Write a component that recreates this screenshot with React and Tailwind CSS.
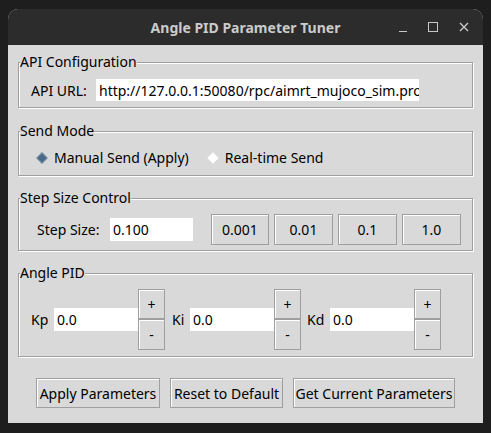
import React from "react";

const Frame = ({ title, className, children }) => (
  <div
    className={`relative border border-[#9f9f9f] shadow-[inset_1px_1px_0_#ffffff,1px_1px_0_#ffffff] ${className}`}
  >
    <span className="absolute left-[1px] top-[-11px] bg-[#d9d9d9] text-[14px] leading-[20px] text-black">
      {title}
    </span>
    {children}
  </div>
);

const TkButton = ({ children, className }) => (
  <button
    className={`flex items-center justify-center border border-[#9f9f9f] bg-[#d9d9d9] shadow-[inset_1px_1px_0_#ffffff] text-[14px] text-black ${className}`}
  >
    {children}
  </button>
);

const Entry = ({ value, className }) => (
  <div
    className={`flex items-center bg-white pl-[3px] text-[14px] text-black ${className}`}
  >
    <span className="whitespace-nowrap overflow-hidden">{value}</span>
  </div>
);

const Radio = ({ checked, label }) => (
  <div className="flex items-center">
    <span className="flex h-[12px] w-[12px] items-center justify-center">
      <span
        className={`block h-[8px] w-[8px] rotate-45 ${
          checked ? "bg-[#4a6984] border border-[#6d8aa3]" : "bg-white"
        }`}
      />
    </span>
    <span className="ml-[6px] text-[14px] text-black">{label}</span>
  </div>
);

const PidField = ({ label, labelW }) => (
  <div className="flex items-center">
    <span className={`text-[14px] text-black ${labelW}`}>{label}</span>
    <Entry value="0.0" className="h-[23px] w-[84px]" />
    <div className="flex flex-col">
      <TkButton className="h-[30px] w-[27px]">+</TkButton>
      <TkButton className="h-[31px] w-[27px]">-</TkButton>
    </div>
  </div>
);

export default function App() {
  return (
    <div className="h-[433px] w-[491px] bg-[#1e1e1e] pl-[8px] pt-[9px] font-['Noto_Sans',sans-serif]">
      <div className="flex h-[414px] w-[475px] flex-col overflow-hidden rounded-t-[10px] bg-[#d9d9d9]">
        {/* title bar */}
        <div className="relative flex h-[36px] shrink-0 items-center justify-center bg-[#2c2c2c]">
          <span className="text-[14px] font-bold text-[#cbcbcb]">
            Angle PID Parameter Tuner
          </span>
          <div className="absolute right-[14px] top-0 flex h-full items-center gap-[21px]">
            <span className="mt-[9px] block h-[1px] w-[8px] bg-[#c8c8c8]" />
            <span className="block h-[10px] w-[10px] border border-[#c8c8c8]" />
            <svg width="10" height="10" viewBox="0 0 10 10">
              <path d="M1 1L9 9M9 1L1 9" stroke="#c8c8c8" strokeWidth="1.4" />
            </svg>
          </div>
        </div>

        <div className="flex flex-col px-[10px] pt-[17px]">
          <Frame title="API Configuration" className="h-[46px] w-[455px]">
            <div className="flex items-center pl-[12px] pt-[16px]">
              <span className="w-[65px] text-[14px] text-black">API URL:</span>
              <Entry
                value="http://127.0.0.1:50080/rpc/aimrt_mujoco_sim.proto"
                className="h-[22px] w-[323px]"
              />
            </div>
          </Frame>

          <Frame title="Send Mode" className="mt-[23px] h-[45px] w-[455px]">
            <div className="flex items-center pl-[17px] pt-[15px]">
              <Radio checked label="Manual Send (Apply)" />
              <div className="ml-[18px]">
                <Radio label="Real-time Send" />
              </div>
            </div>
          </Frame>

          <Frame title="Step Size Control" className="mt-[22px] h-[53px] w-[455px]">
            <div className="flex items-center pl-[18px] pt-[15px]">
              <span className="w-[73px] text-[14px] text-black">Step Size:</span>
              <Entry value="0.100" className="h-[23px] w-[83px]" />
              <div className="ml-[18px] flex gap-[5px]">
                <TkButton className="h-[31px] w-[58px]">0.001</TkButton>
                <TkButton className="h-[31px] w-[59px]">0.01</TkButton>
                <TkButton className="h-[31px] w-[59px]">0.1</TkButton>
                <TkButton className="h-[31px] w-[59px]">1.0</TkButton>
              </div>
            </div>
          </Frame>

          <Frame title="Angle PID" className="mt-[22px] h-[84px] w-[455px]">
            <div className="flex items-center pl-[12px] pt-[15px]">
              <PidField label="Kp" labelW="w-[23px]" />
              <div className="ml-[7px]">
                <PidField label="Ki" labelW="w-[18px]" />
              </div>
              <div className="ml-[6px]">
                <PidField label="Kd" labelW="w-[23px]" />
              </div>
            </div>
          </Frame>

          <div className="mt-[21px] flex gap-[10px] pl-[18px]">
            <TkButton className="h-[30px] w-[124px]">Apply Parameters</TkButton>
            <TkButton className="h-[30px] w-[113px]">Reset to Default</TkButton>
            <TkButton className="h-[30px] w-[162px]">Get Current Parameters</TkButton>
          </div>
        </div>
      </div>
    </div>
  );
}
